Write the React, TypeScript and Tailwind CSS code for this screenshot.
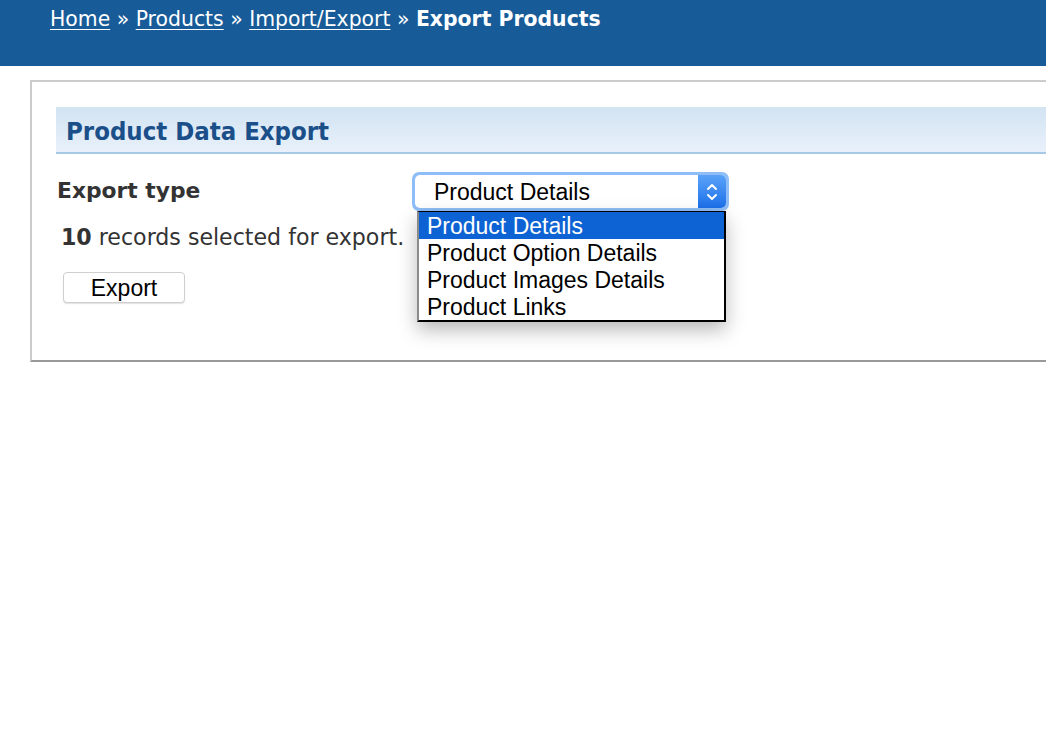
import React from "react";

const options = [
  "Product Details",
  "Product Option Details",
  "Product Images Details",
  "Product Links",
];

function Stepper() {
  return (
    <div className="flex h-full w-[28px] items-center justify-center rounded-r-[5px] bg-gradient-to-b from-[#5aa3f8] to-[#1a6fea]">
      <svg width="12" height="24" viewBox="0 0 12 24" fill="none">
        <path d="M2 9 L6 5 L10 9" stroke="white" strokeWidth="2" strokeLinecap="round" strokeLinejoin="round" />
        <path d="M2 15 L6 19 L10 15" stroke="white" strokeWidth="2" strokeLinecap="round" strokeLinejoin="round" />
      </svg>
    </div>
  );
}

export default function App() {
  return (
    <div className="w-[1046px] h-[740px] overflow-hidden bg-white font-['DejaVu_Sans',Verdana,sans-serif]">
      <header className="h-[66px] bg-[#175b98] pl-[50px] pt-[5px] text-[20.4px] leading-[28px] text-white">
        <a href="#" className="underline decoration-1 underline-offset-[3px]">Home</a>
        <span> » </span>
        <a href="#" className="underline decoration-1 underline-offset-[3px]">Products</a>
        <span> » </span>
        <a href="#" className="underline decoration-1 underline-offset-[3px]">Import/Export</a>
        <span> » </span>
        <span className="font-bold">Export Products</span>
      </header>

      <div className="ml-[30px] mt-[14px] w-[1040px] border-t-2 border-l-2 border-b-2 border-t-[#cccccc] border-l-[#cccccc] border-b-[#999999] pl-[24px] pt-[25px] pb-[57px]">
        <div className="flex h-[47px] items-center border-b-2 border-[#a8c8e6] bg-gradient-to-b from-[#d2e3f2] to-[#e8f1fb] pl-[10px] pt-[3px]">
          <h1 className="font-['DejaVu_Sans_Condensed','DejaVu_Sans',sans-serif] text-[25.5px] font-bold text-[#1a4f89]">Product Data Export</h1>
        </div>

        <div className="relative">
          <div className="mt-[18px] flex items-center">
            <label className="w-[356px] pl-[1px] text-[21.8px] font-bold text-[#333333]">Export type</label>
            <div className="rounded-[7px] bg-[#8fbdf7] p-[3px]">
              <div className="flex h-[33px] w-[311px] items-center rounded-[5px] bg-white font-['Liberation_Sans',Arial,sans-serif] text-[23px] text-black">
                <span className="flex-1 pl-[19px] pt-[2px]">Product Details</span>
                <Stepper />
              </div>
            </div>
          </div>

          <p className="mt-[12px] pl-[5px] text-[22.1px] leading-[28px] text-[#333333]">
            <span className="font-bold">10</span> records selected for export.
          </p>

          <button className="mt-[21px] ml-[7px] h-[31px] w-[122px] rounded-[4px] border border-[#cfcfcf] bg-white font-['Liberation_Sans',Arial,sans-serif] text-[23px] leading-[28px] text-black shadow-[0_1px_1px_rgba(0,0,0,0.12)]">
            Export
          </button>

          <ul className="absolute left-[361px] top-[39px] w-[309px] border-2 border-t-[1px] border-black border-l-[#8a8a8a] bg-white font-['Liberation_Sans',Arial,sans-serif] text-[23px] text-black shadow-[0_8px_18px_rgba(0,0,0,0.28)]">
            {options.map((o, i) => (
              <li
                key={o}
                className={
                  i === 0
                    ? "h-[27px] bg-[#0d63d3] pl-[8px] pt-[1px] leading-[27px] text-white"
                    : "h-[27px] pl-[8px] pt-[1px] leading-[27px]"
                }
              >
                {o}
              </li>
            ))}
          </ul>
        </div>
      </div>
    </div>
  );
}
